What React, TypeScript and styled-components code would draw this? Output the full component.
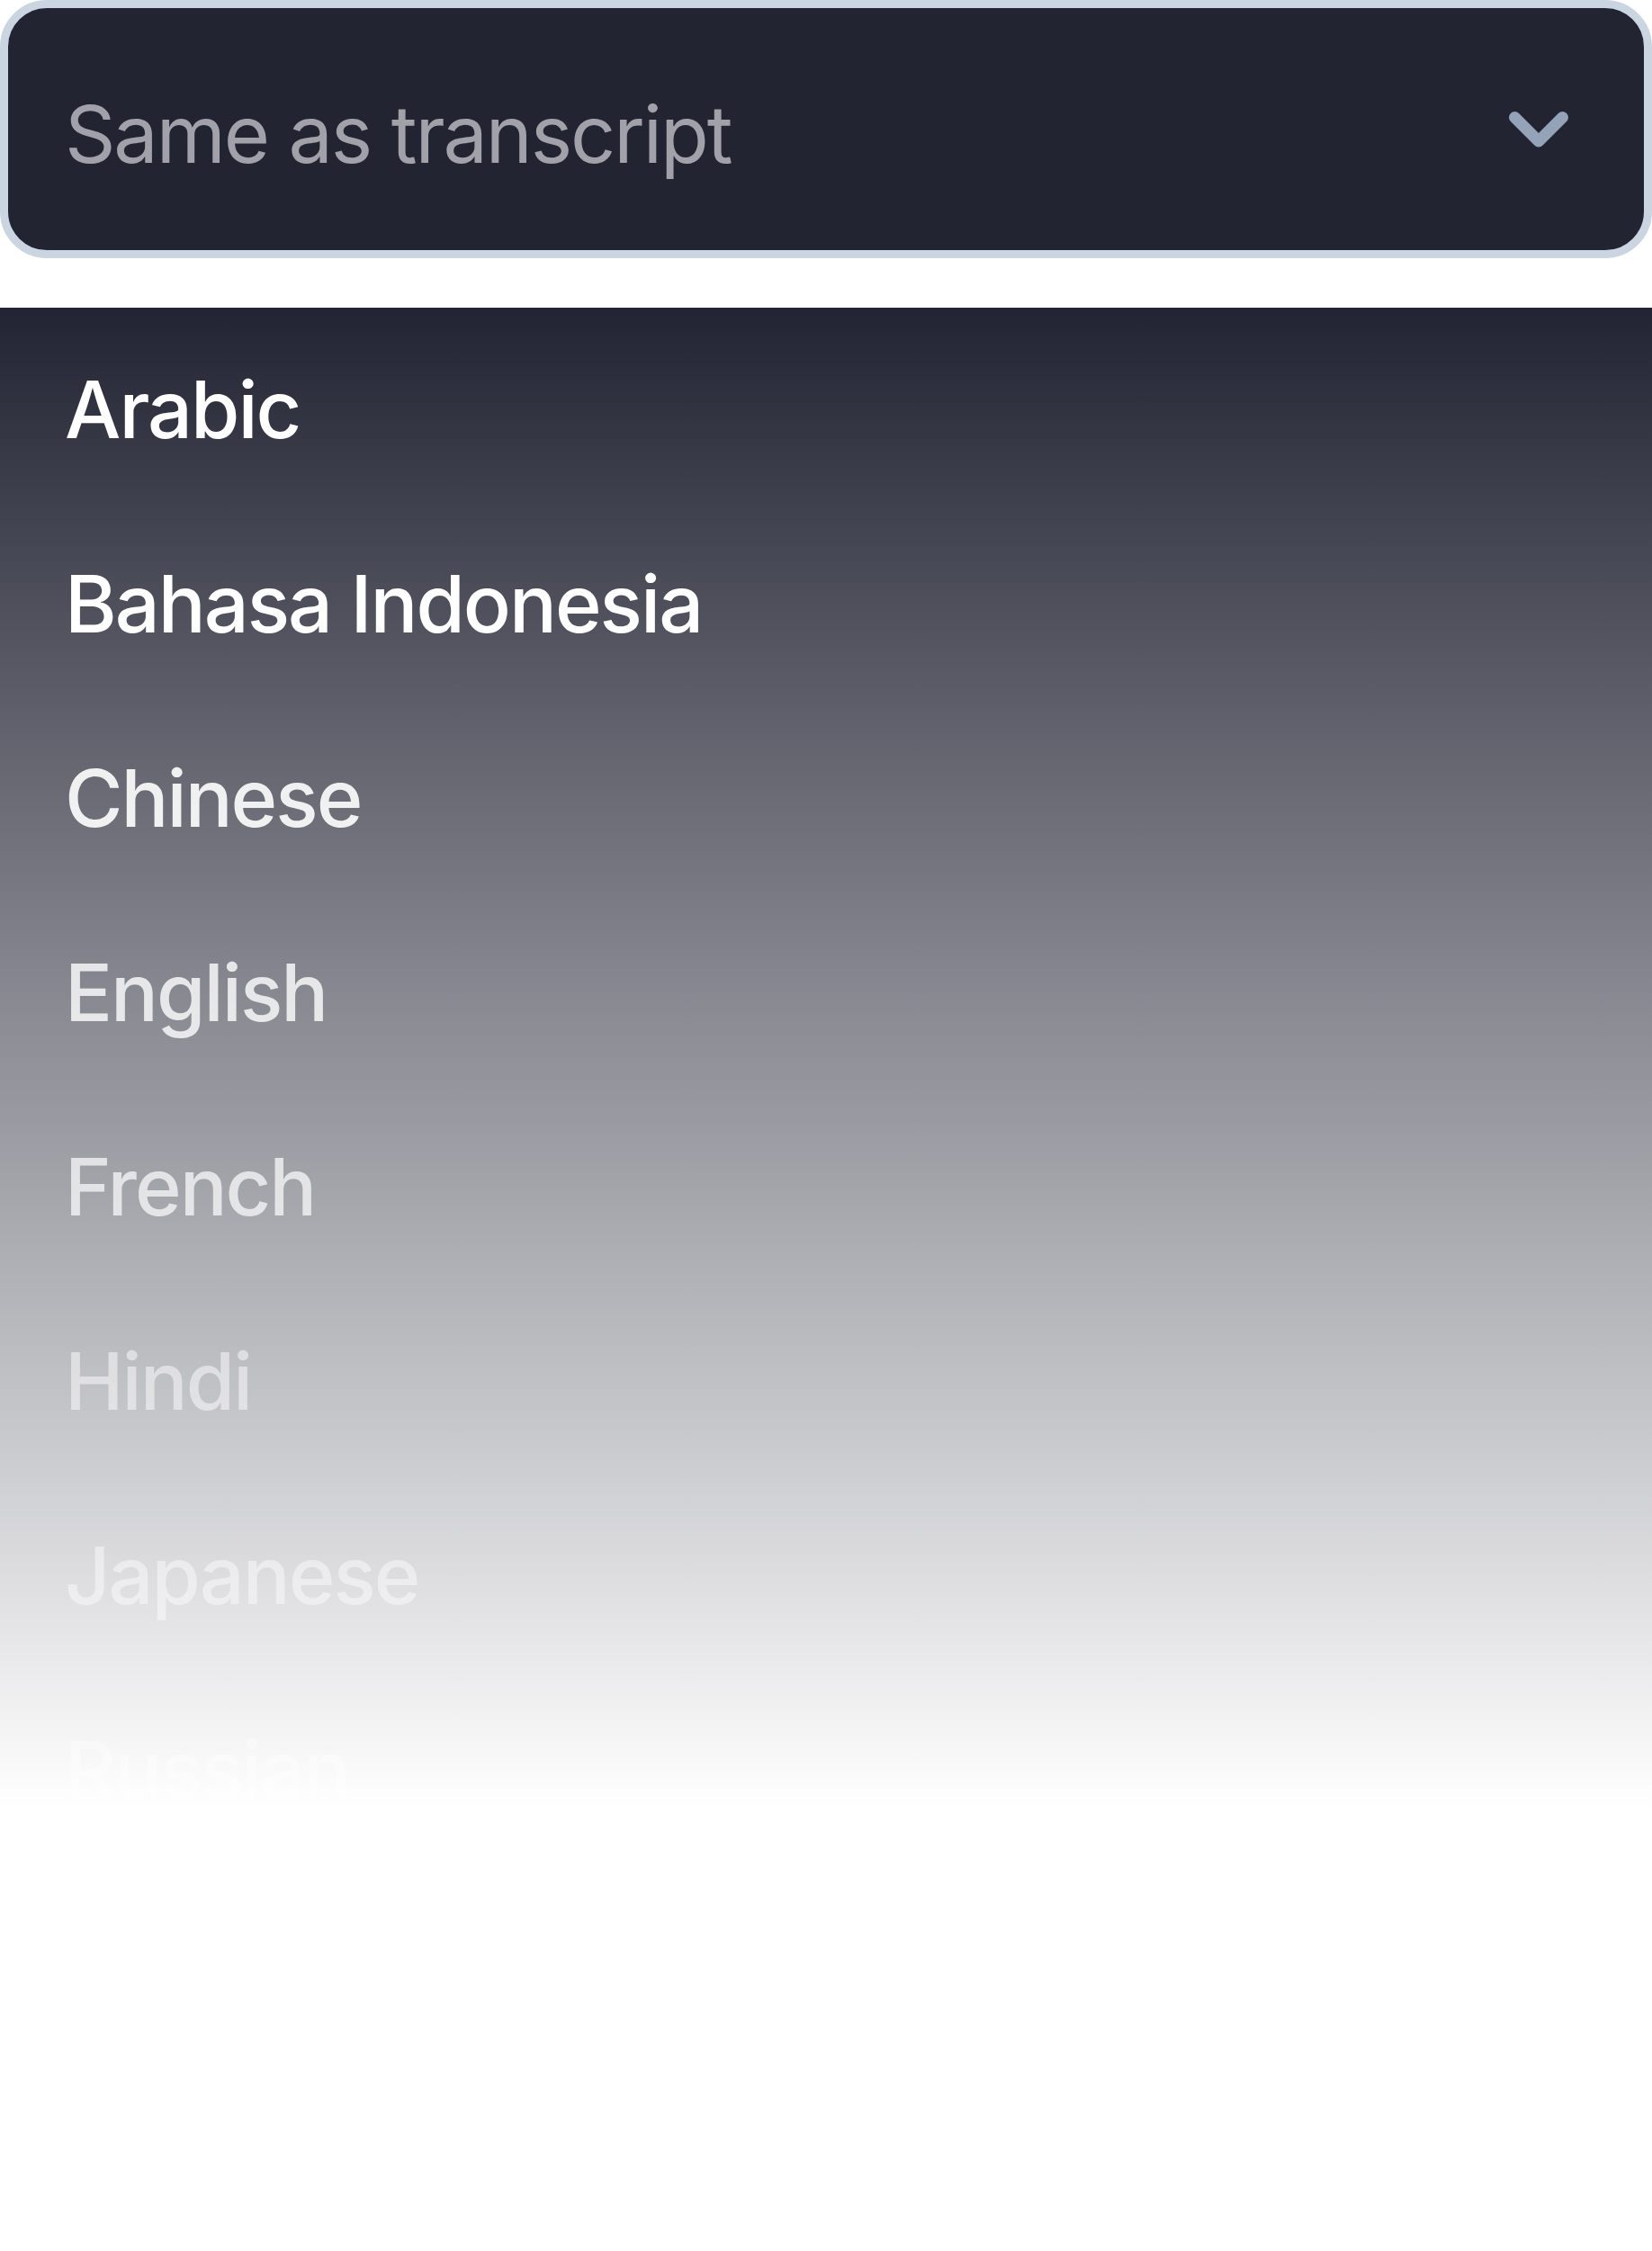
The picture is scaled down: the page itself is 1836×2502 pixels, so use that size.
import React from "react";
import styled, { createGlobalStyle } from "styled-components";

const GlobalStyle = createGlobalStyle`
  html, body {
    margin: 0;
    padding: 0;
    background: #ffffff;
  }
  body {
    font-family: Inter, "Noto Sans", "Liberation Sans", sans-serif;
    -webkit-font-smoothing: antialiased;
  }
`;

const Page = styled.div`
  display: flex;
  flex-direction: column;
  gap: 55px;
  width: 1836px;
  min-height: 2502px;
  background: #ffffff;
`;

const SelectBox = styled.div`
  box-sizing: border-box;
  width: 100%;
  height: 287px;
  display: flex;
  align-items: center;
  justify-content: space-between;
  padding: 0 84px 0 63px;
  background: #222432;
  border: 9px solid #cbd5e1;
  border-radius: 52px;
`;

const Placeholder = styled.span`
  padding-top: 13px;
  font-size: 88px;
  font-weight: 400;
  line-height: 1.2;
  letter-spacing: -2.1px;
  color: #a1a1aa;
`;

const Chevron = styled.svg`
  width: 66px;
  height: 40px;
  display: block;
`;

const List = styled.ul`
  list-style: none;
  margin: 0;
  padding: 5px 0 0;
  display: flex;
  flex-direction: column;
  background: linear-gradient(to bottom, #222433 0px, #ffffff 1668px);
`;

const Item = styled.li<{ $fade: number }>`
  height: 216px;
  display: flex;
  align-items: center;
  padding-left: 72px;
  font-size: 88px;
  font-weight: 500;
  line-height: 216px;
  letter-spacing: -2px;
  color: rgba(255, 255, 255, ${(p) => p.$fade});
`;

const languages: { name: string; fade: number }[] = [
  { name: "Arabic", fade: 1 },
  { name: "Bahasa Indonesia", fade: 1 },
  { name: "Chinese", fade: 0.9 },
  { name: "English", fade: 0.8 },
  { name: "French", fade: 0.7 },
  { name: "Hindi", fade: 0.5 },
  { name: "Japanese", fade: 0.45 },
  { name: "Russian", fade: 0.4 },
];

export default function App() {
  return (
    <>
      <GlobalStyle />
      <Page>
        <SelectBox>
          <Placeholder>Same as transcript</Placeholder>
          <Chevron viewBox="0 0 66 40" fill="none">
            <path
              d="M6.5 6.5 L33 33 L59.5 6.5"
              stroke="#94a3b8"
              strokeWidth="13"
              strokeLinecap="round"
              strokeLinejoin="round"
            />
          </Chevron>
        </SelectBox>
        <List>
          {languages.map((l) => (
            <Item key={l.name} $fade={l.fade}>
              {l.name}
            </Item>
          ))}
        </List>
      </Page>
    </>
  );
}
